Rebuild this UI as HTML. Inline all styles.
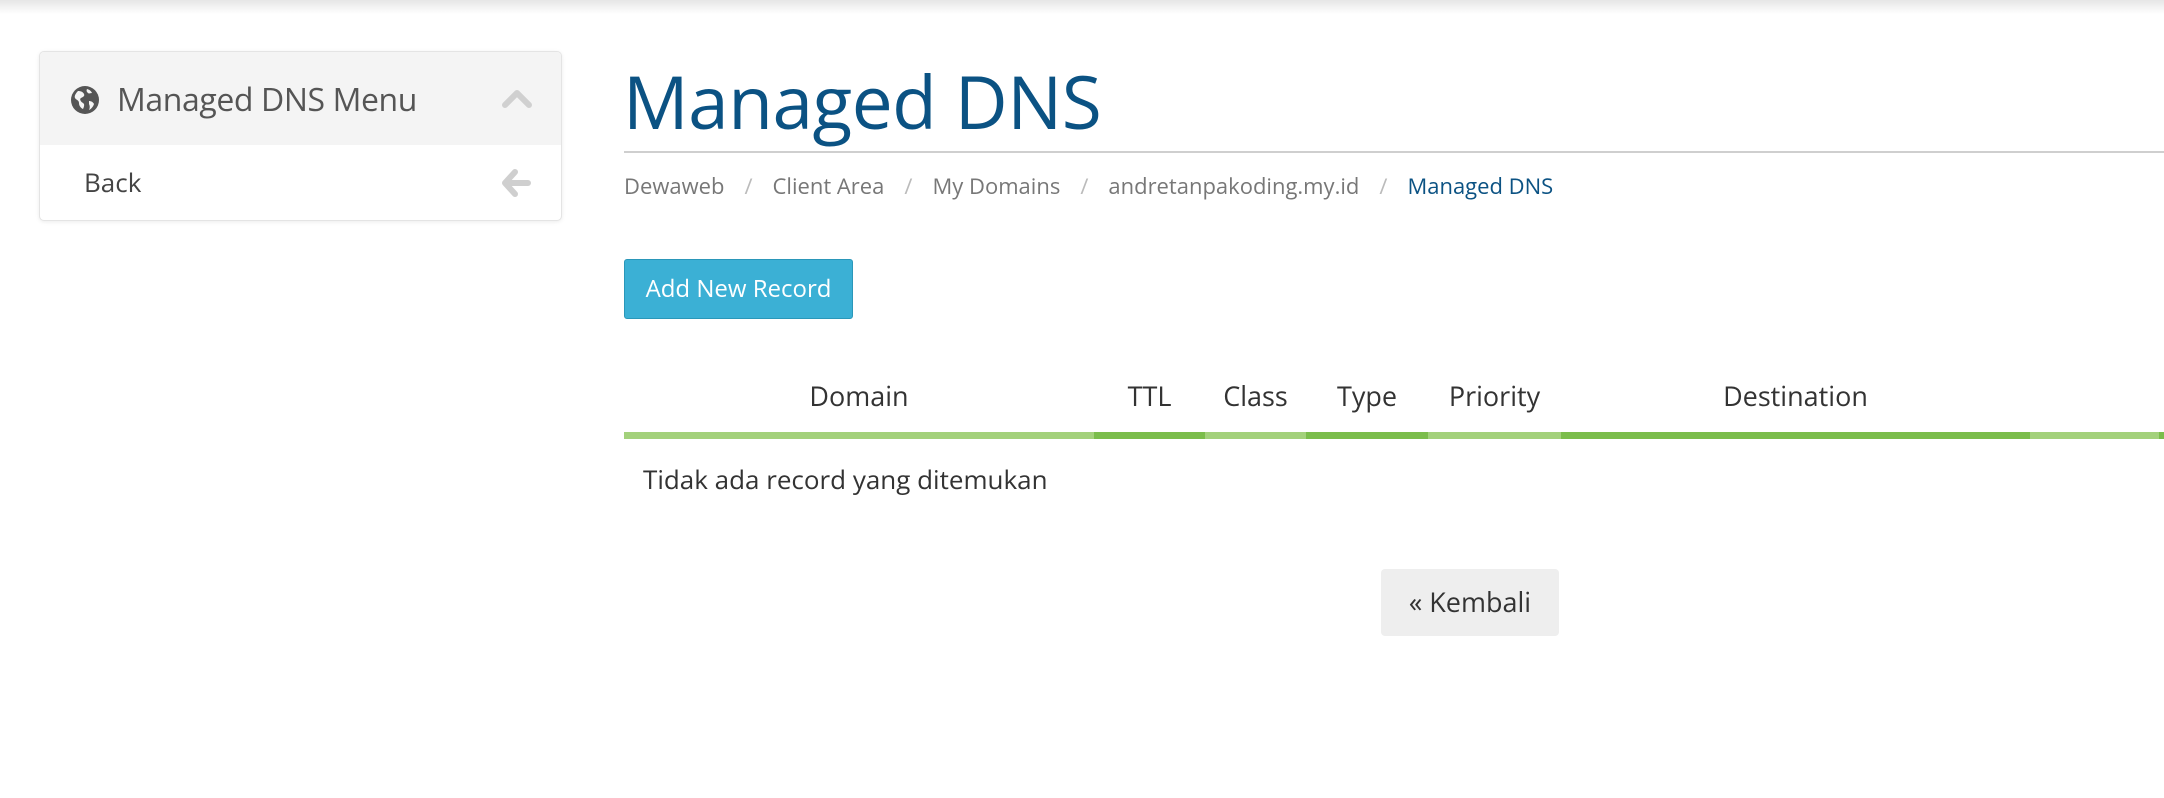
<!DOCTYPE html>
<html><head><meta charset="utf-8"><style>
*{margin:0;padding:0;box-sizing:border-box}
body{width:2164px;height:798px;background:#fff;font-family:"Open Sans","Liberation Sans",sans-serif;position:relative;overflow:hidden;color:#333}
.topshadow{position:absolute;left:0;top:0;width:100%;height:14px;background:linear-gradient(#e6e6e6,#fff)}
.panel{position:absolute;left:39px;top:51px;width:523px;height:170px;border:1px solid #e4e4e4;border-radius:5px;box-shadow:0 1px 4px rgba(0,0,0,.08);overflow:hidden;background:#fff}
.ph{height:93px;background:#f4f4f4;position:relative}
.ph .t{position:absolute;left:77px;top:26px;font-size:32px;color:#555;letter-spacing:-0.4px}
.back{position:absolute;left:44px;top:112px;font-size:26px;color:#444}
.abs{position:absolute}
h1{position:absolute;left:623px;top:65px;font-size:73px;font-weight:normal;color:#0b5283;letter-spacing:-0.5px;line-height:1}
.hr{position:absolute;left:624px;top:151px;width:1540px;height:2px;background:#cfcfcf}
.bc{position:absolute;left:624px;top:171px;font-size:22px;color:#777;white-space:nowrap}
.bc .s{color:#bbb;margin:0 20px}
.bc .a{color:#0b5283}
.btn{position:absolute;left:624px;top:259px;width:229px;height:60px;background:#3bb0d5;border:1px solid #2a97b9;border-radius:3px;color:#fff;font-size:24px;text-align:center;line-height:58px}
.th{position:absolute;top:377px;font-size:27px;color:#333;text-align:center}
.bar{position:absolute;top:432px;height:7px}
.l{background:#a3d17b}.d{background:#7bbd4b}
.empty{position:absolute;left:643px;top:461px;font-size:26px;color:#333}
.kem{position:absolute;left:1381px;top:569px;width:178px;height:67px;background:#eee;border-radius:4px;font-size:27px;color:#333;text-align:center;line-height:66px}
</style></head><body>
<div class="topshadow"></div>
<div class="panel">
 <div class="ph">
  <svg class="abs" style="left:30px;top:33px" width="30" height="30" viewBox="0 0 30 30"><circle cx="15" cy="15" r="14" fill="#555"/><path d="M8 6c3 0 5 1 6 3s-1 3-3 4 0 4 2 5 1 4 0 6c-2-1-4-3-4-6s-3-3-4-5 1-5 3-7z M17 4c3 1 4 2 5 4-2 0-3 1-4 0s-2-2-1-4z M19 16c2 0 4 1 5 3-1 3-3 5-5 6 1-2 1-4 0-6z" fill="#f4f4f4"/></svg>
  <div class="t">Managed DNS Menu</div>
  <svg class="abs" style="left:462px;top:36px" width="30" height="22" viewBox="0 0 30 22"><path d="M3 17L15 5l12 12" stroke="#d0d0d0" stroke-width="6" fill="none" stroke-linecap="round" stroke-linejoin="round"/></svg>
 </div>
 <div class="back">Back</div>
 <svg class="abs" style="left:461px;top:116px" width="30" height="30" viewBox="0 0 30 30"><path d="M14 4L4 15l10 11M5 15h22" stroke="#cfcfcf" stroke-width="6" fill="none" stroke-linecap="round" stroke-linejoin="round"/></svg>
</div>
<h1>Managed DNS</h1>
<div class="hr"></div>
<div class="bc">Dewaweb<span class="s">/</span>Client Area<span class="s">/</span>My Domains<span class="s">/</span>andretanpakoding.my.id<span class="s">/</span><span class="a">Managed DNS</span></div>
<div class="btn">Add New Record</div>
<div class="th" style="left:624px;width:470px">Domain</div>
<div class="th" style="left:1094px;width:111px">TTL</div>
<div class="th" style="left:1205px;width:101px">Class</div>
<div class="th" style="left:1306px;width:122px">Type</div>
<div class="th" style="left:1428px;width:133px">Priority</div>
<div class="th" style="left:1561px;width:469px">Destination</div>
<div class="bar l" style="left:624px;width:470px"></div>
<div class="bar d" style="left:1094px;width:111px"></div>
<div class="bar l" style="left:1205px;width:101px"></div>
<div class="bar d" style="left:1306px;width:122px"></div>
<div class="bar l" style="left:1428px;width:133px"></div>
<div class="bar d" style="left:1561px;width:469px"></div>
<div class="bar l" style="left:2030px;width:129px"></div>
<div class="bar d" style="left:2159px;width:5px"></div>
<div class="empty">Tidak ada record yang ditemukan</div>
<div class="kem">« Kembali</div>
</body></html>
